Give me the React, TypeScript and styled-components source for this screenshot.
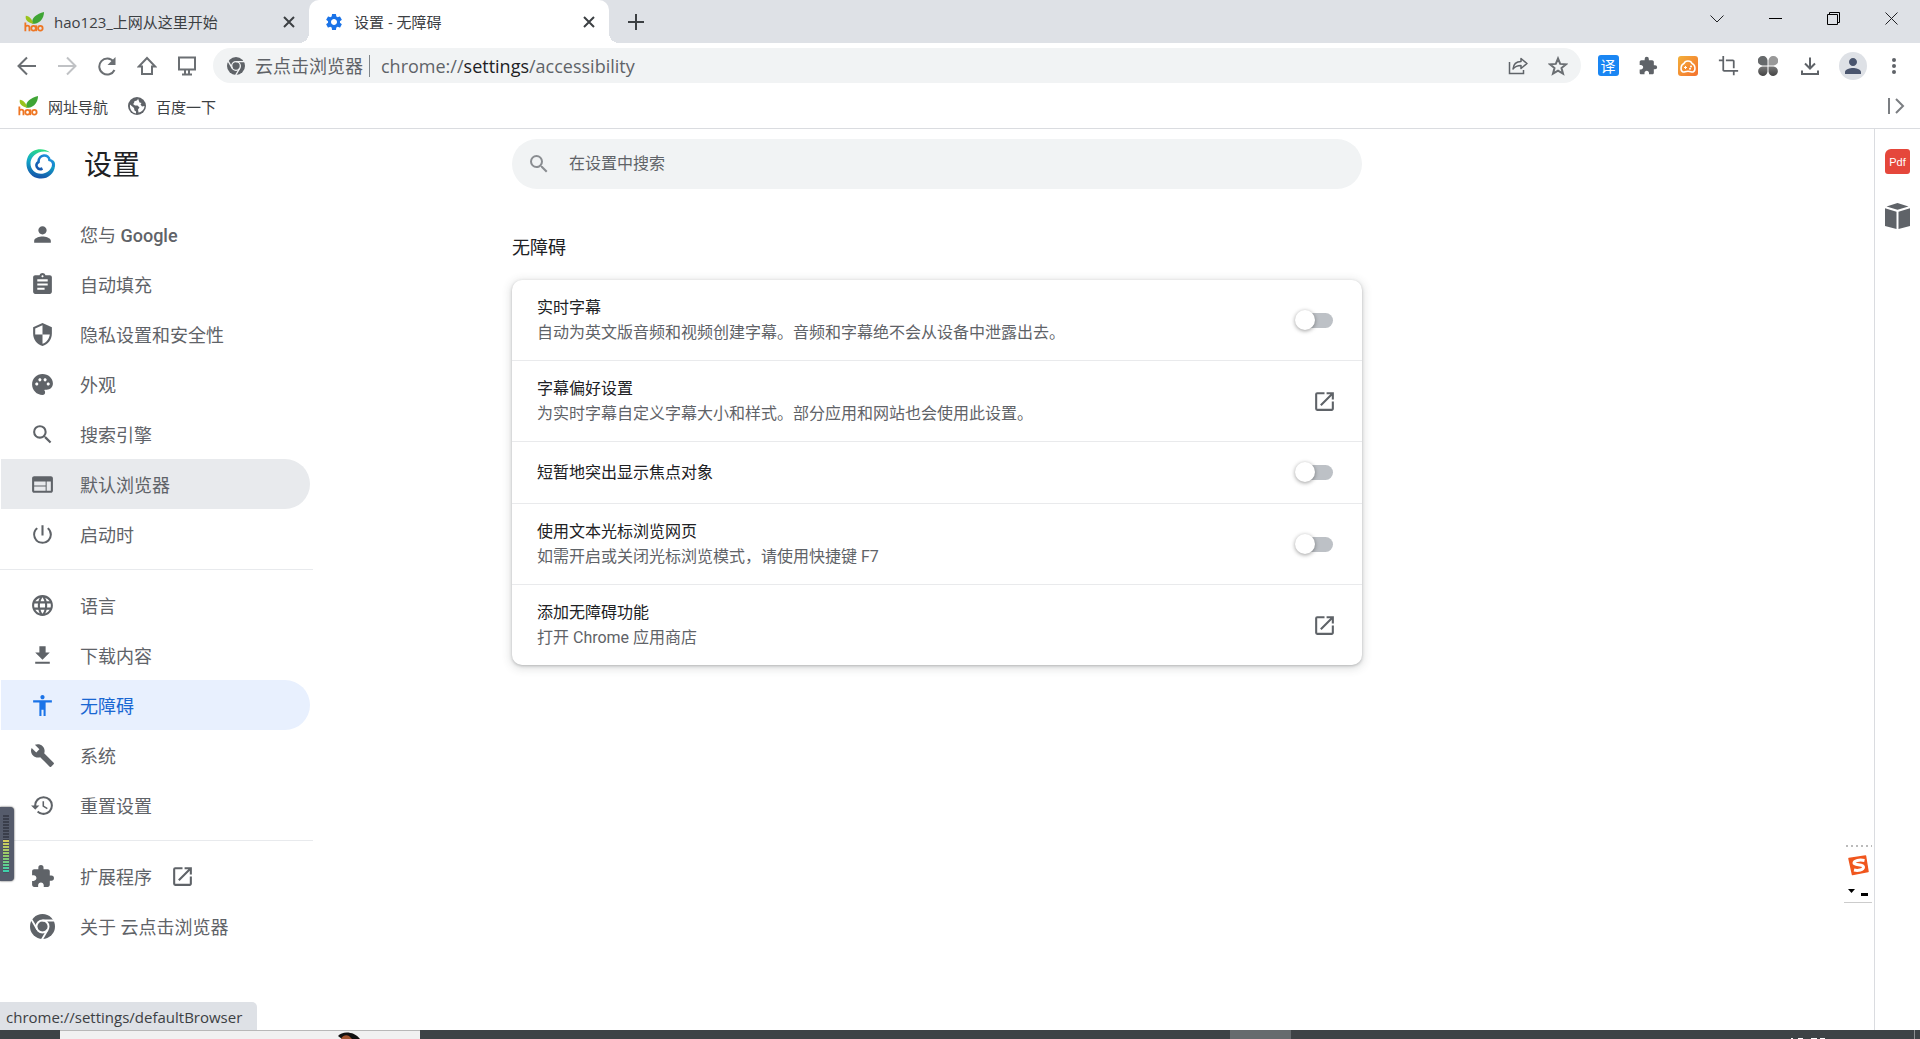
import React from 'react';
import styled, { createGlobalStyle, css } from 'styled-components';
import {
  MdAccessibility,
  MdAssignment,
  MdBuild,
  MdCrop,
  MdExtension,
  MdFileDownload,
  MdHistory,
  MdLanguage,
  MdOpenInNew,
  MdPalette,
  MdPerson,
  MdPowerSettingsNew,
  MdSearch,
  MdSecurity,
  MdSettings,
  MdWeb,
} from 'react-icons/md';

const pageFont = 'Roboto, "Noto Sans CJK SC", sans-serif';
const uiFont = '"Open Sans", "Noto Sans CJK SC", sans-serif';

const GlobalStyle = createGlobalStyle`
  *, *::before, *::after { box-sizing: border-box; }
  body { margin: 0; background: #fff; font-family: ${pageFont}; color: #202124; }
  button, input { font: inherit; color: inherit; margin: 0; }
  button { border: 0; padding: 0; background: none; cursor: pointer; }
  svg { display: block; flex: none; }
`;

/* ---------- drawings ---------- */

const HaoIcon = () => (
  <svg width="20" height="20" viewBox="0 0 22 24" preserveAspectRatio="none" aria-hidden="true">
    <path d="M9 14C8 7 14 2 22 0c0 7-4 13-10 14z" fill="#3fa535" />
    <path d="M10 14C4 13 1 9 2 4.500c4 .5 7 4 8 9.500z" fill="#9ac31c" />
    <g fill="none" stroke="#ee7623" strokeWidth="2">
      <path d="M1.500 12.500V23M1.500 18.500c0-3 4.500-3 4.500 0V23" />
      <ellipse cx="10.500" cy="19.500" rx="2.500" ry="2.800" />
      <path d="M13.500 16v7" />
      <ellipse cx="18" cy="19.500" rx="2.500" ry="2.800" />
    </g>
  </svg>
);

const CloseIcon = () => (
  <svg width="12" height="12" viewBox="0 0 12 12" stroke="#3c4043" strokeWidth="2" aria-hidden="true">
    <path d="M1 1l10 10M11 1L1 11" />
  </svg>
);

const PlusIcon = () => (
  <svg width="16" height="16" viewBox="0 0 16 16" stroke="#3c4043" strokeWidth="2" aria-hidden="true">
    <path d="M8 0v16M0 8h16" />
  </svg>
);

const line = { fill: 'none', stroke: '#6b6f73', strokeWidth: 2 };

const BackIcon = () => (
  <svg width="20" height="20" viewBox="0 0 20 20" {...line} aria-hidden="true">
    <path d="M19 10H2M10 1.500L1.500 10l8.500 8.500" />
  </svg>
);

const ForwardIcon = () => (
  <svg width="20" height="20" viewBox="0 0 20 20" fill="none" stroke="#c0c2c5" strokeWidth="2" aria-hidden="true">
    <path d="M1 10h17M10 1.500l8.500 8.500-8.500 8.500" />
  </svg>
);

const ReloadIcon = () => (
  <svg width="20" height="20" viewBox="0 0 20 20" {...line} aria-hidden="true">
    <path d="M17.500 14A8 8 0 1 1 16.500 5.500" />
    <path d="M18.500 1v8h-8z" fill="#6b6f73" stroke="none" />
  </svg>
);

const HomeIcon = () => (
  <svg width="20" height="20" viewBox="0 0 20 20" {...line} aria-hidden="true">
    <path d="M10 2L1.800 10.500H5V18h10v-7.500h3.200z" />
  </svg>
);

const MonitorIcon = () => (
  <svg width="20" height="20" viewBox="0 0 20 20" {...line} aria-hidden="true">
    <path d="M2 1.500h16v12H2zM5 18.500h10" />
    <path d="M8 14v4M12 14v4" />
  </svg>
);

const ChromeIcon = ({ size, gap }: { size: number; gap: string }) => (
  <svg width={size} height={size} viewBox="0 0 24 24" aria-hidden="true">
    <circle cx="12" cy="12" r="12" fill="#5f6368" />
    <g fill="none" stroke={gap} strokeWidth="1.800">
      <circle cx="12" cy="12" r="5.800" fill="#5f6368" />
      <path d="M12 6.200h11M6.980 14.900L1.500 5.400M17.020 14.900l-5.500 9.500" />
    </g>
  </svg>
);

const ShareIcon = () => (
  <svg width="20" height="18" viewBox="0 0 20 18" fill="none" stroke="#5f6368" strokeWidth="1.500" aria-hidden="true">
    <path d="M1.500 5v11.500h14V13" />
    <path d="M5 12c.5-5 3-7.500 8-7.500V1.500L19 6.500l-6 5V8.500c-4 0-6 1-8 3.500z" strokeLinejoin="round" />
  </svg>
);

const StarIcon = () => (
  <svg width="20" height="20" viewBox="0 0 20 20" {...line} aria-hidden="true">
    <path d="M10 2.500l2.200 5.400 5.800.4-4.500 3.700 1.500 5.700-5-3.100-5 3.100 1.500-5.700L2 8.300l5.800-.4z" />
  </svg>
);

const GameIcon = () => (
  <svg width="20" height="20" viewBox="0 0 20 20" aria-hidden="true">
    <defs>
      <linearGradient id="game" x1="0" y1="0" x2="1" y2="1">
        <stop offset="0" stopColor="#f2b03a" />
        <stop offset="1" stopColor="#f5702c" />
      </linearGradient>
    </defs>
    <rect width="20" height="20" rx="3" fill="url(#game)" />
    <path
      d="M6 7.500C7 4 13 4 14 7.500c3.500 1 4 7.500 1 8.500-2 .3-2-.8-5-.8s-3 1.100-5 .8C2 15 2.500 8.500 6 7.500z"
      fill="none"
      stroke="#fff"
      strokeWidth="1.500"
    />
    <path d="M6 11.500h3M7.500 10v3" stroke="#fff" strokeWidth="1" />
    <circle cx="13" cy="10.500" r="1" fill="#fff" />
    <circle cx="12" cy="12.800" r="1" fill="#fff" />
  </svg>
);

const CloverIcon = () => (
  <svg width="20" height="20" viewBox="0 0 20 20" aria-hidden="true">
    <defs>
      <linearGradient id="leaf" x1="0" y1="0" x2="0" y2="1">
        <stop offset="0" stopColor="#777" />
        <stop offset="1" stopColor="#444" />
      </linearGradient>
    </defs>
    <path d="M4.500 0A4.500 4.500 0 0 1 9.500 4.500v5h-5a4.700 4.700 0 0 1 0-9.500z" fill="#66696b" />
    <path d="M15.500 0a4.700 4.700 0 0 1 0 9.500h-5v-5A4.700 4.700 0 0 1 15.500 0z" fill="#999" />
    <path d="M4.500 10.500h5v5a4.700 4.700 0 1 1-5-5z" fill="url(#leaf)" />
    <path d="M10.500 10.500h5a4.700 4.700 0 1 1-5 5z" fill="url(#leaf)" />
  </svg>
);

const TrayIcon = () => (
  <svg width="20" height="20" viewBox="0 0 20 20" fill="none" stroke="#5f6368" strokeWidth="2" aria-hidden="true">
    <path d="M10 1.500V12M5 7.500l5 5 5-5M2 14.500V18h16v-3.500" />
  </svg>
);

const BookmarkGlobe = () => (
  <svg width="18" height="18" viewBox="0 0 18 18" aria-hidden="true">
    <circle cx="9" cy="9" r="9" fill="#5f6368" />
    <path d="M10 1.500c-.5 2-1 2-3 2.500-1.500.5 0 2-2 3l2 1.500h2.500l2 2-1.500 2 .5 3c3.500-.5 6-3.500 6-6.500l-2.500.5-1.500-2 1-1.500-2-.5z" fill="#fff" />
    <path d="M2 7.500l4 3.500.5 2.500 1.500 1v2C4 15.500 1.500 12.500 2 7.500z" fill="#fff" />
  </svg>
);

const PanelIcon = () => (
  <svg width="18" height="16" viewBox="0 0 18 16" fill="none" stroke="#7b7e82" strokeWidth="2" aria-hidden="true">
    <path d="M2 0v16M9 1l7 7-7 7" />
  </svg>
);

const CubeIcon = () => (
  <svg width="25" height="26" viewBox="0 0 25 26" fill="#5f6368" aria-hidden="true">
    <path d="M12.500 0L23.500 3.500 12.500 6.800 1.500 3.500zM0 5.200l11.500 3.600V26L0 23zM25 5.200L13.500 8.800V26L25 23z" />
  </svg>
);

const CloudLogo = () => (
  <svg width="30" height="30" viewBox="0 0 30 30" fill="none" aria-hidden="true">
    <defs>
      <linearGradient id="ring" x1="0.600" y1="0" x2="0.400" y2="1">
        <stop offset="0" stopColor="#2fe07c" />
        <stop offset="0.450" stopColor="#12a9c9" />
        <stop offset="1" stopColor="#1550a8" />
      </linearGradient>
      <linearGradient id="cloud" x1="0" y1="1" x2="1" y2="0">
        <stop offset="0" stopColor="#1550a8" />
        <stop offset="1" stopColor="#1fa0e8" />
      </linearGradient>
    </defs>
    <path
      d="M24 3.500C17-2 6-.5 2 7.500-2 16 2 26.500 11 29c9 2.500 17-3 18-12 .4-3-.5-5-2.500-6 .5 6-2 12-9 13.500C10 26 4.500 21 4.500 14.500 4.500 7 13 0 24 3.500z"
      fill="url(#ring)"
    />
    <path d="M16.500 19.500c-5 2.500-8.500-4-4-6.500 0-8 10.500-8.500 11-2 3 .5 4.500 3.500 3.500 6.500" stroke="url(#cloud)" strokeWidth="2.600" />
  </svg>
);

const SogouIcon = () => (
  <svg width="22" height="22" viewBox="0 0 22 22" aria-hidden="true">
    <path d="M2 4.500L18.500 2 21 17.500 5.500 20.500z" fill="#f0561d" stroke="#f0561d" strokeWidth="1.500" strokeLinejoin="round" />
    <path d="M17.500 6.500c-5-1-10.500 0-10.500 2.500S16.500 10 16.500 13s-5.500 4-9.500 3" fill="none" stroke="#fff" strokeWidth="3" />
  </svg>
);

/* ---------- browser frame ---------- */

const Shell = styled.div`
  min-height: 100vh;
  display: flex;
  flex-direction: column;
  position: relative;
`;

const TabStrip = styled.header`
  display: flex;
  align-items: stretch;
  height: 43px;
  background: #dee1e6;
  font-family: ${uiFont};
  font-size: 15px;
  color: #3c4043;
`;

const Tab = styled.div<{ $active?: boolean }>`
  position: relative;
  display: flex;
  align-items: center;
  gap: 8px;
  width: 300px;
  padding: 0 14px 0 15px;
  margin-left: ${(p) => (p.$active ? 0 : 9)}px;
  ${(p) =>
    p.$active &&
    css`
      background: #fff;
      border-radius: 10px 10px 0 0;
      &::before,
      &::after {
        content: '';
        position: absolute;
        bottom: 0;
        width: 10px;
        height: 10px;
      }
      &::before {
        left: -10px;
        background: radial-gradient(circle at 0 0, transparent 10px, #fff 10px);
      }
      &::after {
        right: -10px;
        background: radial-gradient(circle at 100% 0, transparent 10px, #fff 10px);
      }
    `}
`;

const TabTitle = styled.button`
  flex: 1;
  display: flex;
  align-items: center;
  gap: 10px;
  text-align: left;
  white-space: nowrap;
`;

const NewTab = styled.button`
  display: grid;
  place-items: center;
  width: 54px;
`;

const WindowButtons = styled.div`
  display: flex;
  margin-left: auto;
  height: 37px;
`;

const WindowButton = styled.button`
  display: grid;
  place-items: center;
  width: 58px;
`;

const Toolbar = styled.div`
  display: flex;
  align-items: center;
  height: 45px;
  padding: 0 7px;
  font-family: ${uiFont};
`;

const ToolButton = styled.button<{ $width?: number }>`
  display: grid;
  place-items: center;
  width: ${(p) => p.$width ?? 40}px;
  height: 35px;
  color: #5f6368;
`;

const Omnibox = styled.div`
  flex: 1;
  display: flex;
  align-items: center;
  height: 35px;
  margin: 0 7px 0 6px;
  padding: 0 3px 0 14px;
  border-radius: 18px;
  background: #f1f3f4;
  color: #5f6368;
  font-size: 18px;
  line-height: 22px;
  white-space: nowrap;
`;

const SiteName = styled.span`
  padding: 0 6px 0 10px;
  border-right: 1px solid #80868b;
`;

const Address = styled.div`
  flex: 1;
  padding-left: 11px;
  b {
    font-weight: 400;
    color: #202124;
  }
`;

const TranslateBadge = styled.span`
  display: grid;
  place-items: center;
  width: 21px;
  height: 21px;
  border-radius: 3px;
  background: #1a86f3;
  color: #fff;
  font-size: 15px;
  line-height: 20px;
`;

const Avatar = styled.span`
  display: grid;
  place-items: center;
  width: 28px;
  height: 28px;
  border-radius: 50%;
  background: #dee1e6;
  color: #4a556e;
`;

const BookmarkBar = styled.nav`
  display: flex;
  align-items: center;
  gap: 20px;
  height: 41px;
  padding: 0 15px 4px 18px;
  border-bottom: 1px solid #dadce0;
  font-family: ${uiFont};
  font-size: 15px;
  color: #3c4043;
  button:last-child {
    margin-left: auto;
  }
`;

const Bookmark = styled.a`
  display: flex;
  align-items: center;
  gap: 10px;
  color: inherit;
  text-decoration: none;
`;

/* ---------- page ---------- */

const Body = styled.div`
  flex: 1;
  display: flex;
`;

const Page = styled.div`
  flex: 1;
  display: grid;
  grid-template-columns: minmax(333px, 1fr) minmax(0, 850px) 1fr;
`;

const SidePanel = styled.aside`
  display: flex;
  flex-direction: column;
  align-items: center;
  gap: 29px;
  width: 46px;
  padding-top: 20px;
  border-left: 1px solid #dadce0;
`;

const PdfBadge = styled.span`
  display: grid;
  place-items: center;
  width: 25px;
  height: 25px;
  border-radius: 6px 3px 3px 3px;
  background: #e5473b;
  color: #fff;
  font-family: "Liberation Sans", sans-serif;
  font-size: 11px;
`;

const Menu = styled.div`
  width: 313px;
`;

const Brand = styled.div`
  display: flex;
  align-items: center;
  gap: 28px;
  height: 70px;
  padding-left: 26px;
`;

const BrandTitle = styled.h1`
  margin: 0;
  padding-top: 4px;
  font-size: 28px;
  line-height: 34px;
  font-weight: 400;
`;

const MenuGroup = styled.nav`
  padding: 10px 0;
  & + & {
    border-top: 1px solid #e8eaed;
  }
`;

const MenuLink = styled.a<{ $state?: 'hover' | 'selected' }>`
  display: flex;
  align-items: center;
  gap: 25px;
  height: 50px;
  margin: 0 3px 0 1px;
  padding-left: 29px;
  border-radius: 0 25px 25px 0;
  font-size: 18px;
  text-decoration: none;
  color: ${(p) => (p.$state === 'selected' ? '#1967d2' : '#5f6368')};
  background: ${(p) => (p.$state === 'selected' ? '#e8f0fe' : p.$state === 'hover' ? '#e8eaed' : 'transparent')};
  svg {
    color: ${(p) => (p.$state === 'selected' ? '#1a73e8' : '#5f6368')};
  }
  b {
    font-weight: 500;
  }
`;

const MenuText = styled.span<{ $external?: boolean }>`
  ${(p) =>
    p.$external &&
    css`
      display: flex;
      align-items: center;
      gap: 18px;
    `}
`;

const Main = styled.main`
  padding-top: 10px;
`;

const SearchField = styled.label`
  display: flex;
  align-items: center;
  gap: 18px;
  height: 50px;
  padding: 0 15px;
  border-radius: 25px;
  background: #f1f3f4;
  color: #8a8d91;
`;

const SearchInput = styled.input`
  flex: 1;
  border: 0;
  padding: 0;
  outline: 0;
  background: none;
  font-size: 16px;
  line-height: 24px;
  color: #202124;
  &::placeholder {
    color: #5f6368;
    opacity: 1;
  }
`;

const SectionTitle = styled.h2`
  margin: 46px 0 19px;
  font-size: 18px;
  line-height: 26px;
  font-weight: 400;
`;

const Card = styled.section`
  border-radius: 10px;
  background: #fff;
  box-shadow: 0 1px 3px rgba(60, 64, 67, 0.3), 0 2px 8px 2px rgba(60, 64, 67, 0.15);
`;

const Row = styled.div`
  display: flex;
  align-items: center;
  justify-content: space-between;
  min-height: 62px;
  padding: 15px 25px;
  font-size: 16px;
  line-height: 25px;
  & + & {
    border-top: 1px solid #e9eaec;
  }
`;

const RowLabel = styled.label`
  display: block;
`;

const RowHint = styled.div`
  color: #5f6368;
`;

const Switch = styled.input`
  appearance: none;
  position: relative;
  width: 35px;
  height: 15px;
  margin-right: 4px;
  border-radius: 8px;
  background: #bdc1c6;
  cursor: pointer;
  &::before {
    content: '';
    position: absolute;
    top: -3px;
    left: -3px;
    width: 20px;
    height: 20px;
    border-radius: 50%;
    background: #fff;
    box-shadow: 0 1px 4px rgba(0, 0, 0, 0.4);
  }
  &:checked::before {
    left: 18px;
    background: #1a73e8;
  }
`;

const LinkButton = styled.button`
  display: grid;
  place-items: center;
  color: #5f6368;
`;

/* ---------- things floating over the page ---------- */

const StatusBubble = styled.div`
  position: absolute;
  left: 0;
  bottom: 9px;
  height: 28px;
  padding: 0 15px 0 6px;
  border-radius: 0 5px 0 0;
  background: #dee1e6;
  color: #3c4043;
  font-family: ${uiFont};
  font-size: 15px;
  line-height: 30px;
`;

const Meter = styled.div`
  position: absolute;
  left: 0;
  bottom: 158px;
  display: flex;
  flex-direction: column;
  align-items: center;
  padding: 8px 5px 8px 3px;
  border-radius: 0 4px 4px 0;
  background: #555b6b;
  box-shadow: 0 0 2px #333;
`;

const MeterLevel = styled.div<{ $lit?: boolean }>`
  width: 6px;
  height: ${(p) => (p.$lit ? 33 : 25)}px;
  background: ${(p) =>
    p.$lit
      ? 'repeating-linear-gradient(transparent 0 2px, #4b505e 2px 3px), linear-gradient(#d9cf5b, #8ecb6c 50%, #35d0b4)'
      : 'repeating-linear-gradient(#3a3e4b 0 2px, #555b6b 2px 3px)'};
`;

const InputBar = styled.div`
  position: absolute;
  right: 48px;
  bottom: 136px;
  display: flex;
  flex-direction: column;
  align-items: center;
  gap: 13px;
  width: 28px;
  height: 58px;
  padding-top: 9px;
  border-bottom: 1px solid #ccc;
  background: repeating-linear-gradient(90deg, transparent 0 2px, #bbb 2px 4px, transparent 4px 5px) top / 100% 2px no-repeat;
`;

const Taskbar = styled.footer`
  position: relative;
  display: flex;
  height: 9px;
  overflow: hidden;
  background: #3e4346;
  padding-left: 60px;
`;

const TaskSearch = styled.div`
  display: flex;
  justify-content: flex-end;
  width: 360px;
  padding-right: 60px;
  background: #f1f1f1;
  border-top: 1px solid #b8b8b8;
`;

const TaskTile = styled.div`
  width: 61px;
  margin-left: auto;
  background: #666b6e;
`;

const TaskTray = styled.div`
  display: flex;
  justify-content: flex-end;
  align-items: flex-end;
  width: 536px;
`;

const TaskEdge = styled.div`
  width: 6px;
  margin-left: 87px;
  border-left: 1px solid #8d9092;
`;

type MenuItem = {
  label: React.ReactNode;
  icon: React.ReactNode;
  state?: 'hover' | 'selected';
  external?: boolean;
};

const groups: MenuItem[][] = [
  [
    { label: <>您与 <b>Google</b></>, icon: <MdPerson size={25} /> },
    { label: '自动填充', icon: <MdAssignment size={25} /> },
    { label: '隐私设置和安全性', icon: <MdSecurity size={25} /> },
    { label: '外观', icon: <MdPalette size={25} /> },
    { label: '搜索引擎', icon: <MdSearch size={25} /> },
    { label: '默认浏览器', icon: <MdWeb size={25} />, state: 'hover' },
    { label: '启动时', icon: <MdPowerSettingsNew size={25} /> },
  ],
  [
    { label: '语言', icon: <MdLanguage size={25} /> },
    { label: '下载内容', icon: <MdFileDownload size={25} /> },
    { label: '无障碍', icon: <MdAccessibility size={25} />, state: 'selected' },
    { label: '系统', icon: <MdBuild size={25} /> },
    { label: '重置设置', icon: <MdHistory size={25} /> },
  ],
  [
    { label: '扩展程序', icon: <MdExtension size={25} />, external: true },
    { label: '关于 云点击浏览器', icon: <ChromeIcon size={25} gap="#fff" /> },
  ],
];

const rows: { id: string; title: string; hint?: string; kind: 'switch' | 'link' }[] = [
  { id: 'live-caption', title: '实时字幕', hint: '自动为英文版音频和视频创建字幕。音频和字幕绝不会从设备中泄露出去。', kind: 'switch' },
  { id: 'caption-style', title: '字幕偏好设置', hint: '为实时字幕自定义字幕大小和样式。部分应用和网站也会使用此设置。', kind: 'link' },
  { id: 'focus-highlight', title: '短暂地突出显示焦点对象', kind: 'switch' },
  { id: 'caret-browsing', title: '使用文本光标浏览网页', hint: '如需开启或关闭光标浏览模式，请使用快捷键 F7', kind: 'switch' },
  { id: 'web-store', title: '添加无障碍功能', hint: '打开 Chrome 应用商店', kind: 'link' },
];

export default function App() {
  return (
    <Shell>
      <GlobalStyle />
      <TabStrip>
        <Tab>
          <TabTitle><HaoIcon />hao123_上网从这里开始</TabTitle>
          <button aria-label="关闭标签页"><CloseIcon /></button>
        </Tab>
        <Tab $active>
          <TabTitle><MdSettings size={20} color="#1a73e8" />设置 - 无障碍</TabTitle>
          <button aria-label="关闭标签页"><CloseIcon /></button>
        </Tab>
        <NewTab aria-label="打开新的标签页"><PlusIcon /></NewTab>
        <WindowButtons>
          <WindowButton aria-label="搜索标签页">
            <svg width="14" height="8" viewBox="0 0 14 8" fill="none" stroke="#202124"><path d="M.5.5L7 7 13.500.5" /></svg>
          </WindowButton>
          <WindowButton aria-label="最小化">
            <svg width="13" height="1" viewBox="0 0 13 1"><path d="M0 0h13v1H0z" /></svg>
          </WindowButton>
          <WindowButton aria-label="还原">
            <svg width="13" height="13" viewBox="0 0 13 13" fill="none" stroke="#000"><path d="M.5 2.500h10v10H.5zM2.500 2.500v-2h10v10h-2" /></svg>
          </WindowButton>
          <WindowButton aria-label="关闭">
            <svg width="13" height="13" viewBox="0 0 13 13" fill="none" stroke="#202124"><path d="M.5.5l12 12M12.500.5l-12 12" /></svg>
          </WindowButton>
        </WindowButtons>
      </TabStrip>

      <Toolbar>
        <ToolButton aria-label="后退"><BackIcon /></ToolButton>
        <ToolButton aria-label="前进"><ForwardIcon /></ToolButton>
        <ToolButton aria-label="重新加载"><ReloadIcon /></ToolButton>
        <ToolButton aria-label="主页"><HomeIcon /></ToolButton>
        <ToolButton aria-label="桌面"><MonitorIcon /></ToolButton>
        <Omnibox>
          <ChromeIcon size={18} gap="#f1f3f4" />
          <SiteName>云点击浏览器</SiteName>
          <Address role="textbox" tabIndex={0} aria-label="地址栏">
            chrome://<b>settings</b>/accessibility
          </Address>
          <ToolButton aria-label="分享"><ShareIcon /></ToolButton>
          <ToolButton aria-label="收藏"><StarIcon /></ToolButton>
        </Omnibox>
        <ToolButton aria-label="翻译"><TranslateBadge>译</TranslateBadge></ToolButton>
        <ToolButton aria-label="扩展程序"><MdExtension size={20} /></ToolButton>
        <ToolButton aria-label="游戏"><GameIcon /></ToolButton>
        <ToolButton aria-label="截图"><MdCrop size={21} /></ToolButton>
        <ToolButton aria-label="应用"><CloverIcon /></ToolButton>
        <ToolButton aria-label="下载" $width={44}><TrayIcon /></ToolButton>
        <ToolButton aria-label="用户" $width={42}><Avatar><MdPerson size={24} /></Avatar></ToolButton>
        <ToolButton aria-label="菜单" $width={39}>
          <svg width="4" height="16" viewBox="0 0 4 16" fill="#5f6368">
            <circle cx="2" cy="2" r="2" /><circle cx="2" cy="8" r="2" /><circle cx="2" cy="14" r="2" />
          </svg>
        </ToolButton>
      </Toolbar>

      <BookmarkBar>
        <Bookmark href="#nav"><HaoIcon />网址导航</Bookmark>
        <Bookmark href="#baidu"><BookmarkGlobe />百度一下</Bookmark>
        <button aria-label="侧边栏"><PanelIcon /></button>
      </BookmarkBar>

      <Body>
        <Page>
          <Menu>
            <Brand>
              <CloudLogo />
              <BrandTitle>设置</BrandTitle>
            </Brand>
            {groups.map((items, g) => (
              <MenuGroup key={g}>
                {items.map((item, i) => (
                  <MenuLink key={i} href="#" $state={item.state}>
                    {item.icon}
                    <MenuText $external={item.external}>
                      {item.label}
                      {item.external && <MdOpenInNew size={25} />}
                    </MenuText>
                  </MenuLink>
                ))}
              </MenuGroup>
            ))}
          </Menu>
          <Main>
            <SearchField>
              <MdSearch size={24} />
              <SearchInput type="text" placeholder="在设置中搜索" aria-label="在设置中搜索" />
            </SearchField>
            <SectionTitle>无障碍</SectionTitle>
            <Card>
              {rows.map((row) => (
                <Row key={row.id}>
                  <div>
                    <RowLabel htmlFor={row.id}>{row.title}</RowLabel>
                    {row.hint && <RowHint>{row.hint}</RowHint>}
                  </div>
                  {row.kind === 'switch' ? (
                    <Switch type="checkbox" id={row.id} />
                  ) : (
                    <LinkButton id={row.id}><MdOpenInNew size={25} /></LinkButton>
                  )}
                </Row>
              ))}
            </Card>
          </Main>
        </Page>
        <SidePanel>
          <button aria-label="Pdf"><PdfBadge>Pdf</PdfBadge></button>
          <button aria-label="工具箱"><CubeIcon /></button>
        </SidePanel>
      </Body>

      <Taskbar>
        <TaskSearch>
          <svg width="22" height="8" viewBox="0 0 22 8">
            <path d="M0 5C4 0 16 0 22 8H4z" fill="#111" />
            <path d="M3 8c1-3 5-5 8-3l3 3z" fill="#a3542f" />
          </svg>
        </TaskSearch>
        <TaskTile />
        <TaskTray>
          <svg width="36" height="1" viewBox="0 0 36 1" fill="#fff">
            <path d="M0 0h2v1H0zM7 0h5v1H7zM20 0h6v1h-6zM29 0h5v1h-5z" />
          </svg>
        </TaskTray>
        <TaskEdge />
      </Taskbar>

      <StatusBubble>chrome://settings/defaultBrowser</StatusBubble>
      <Meter>
        <MeterLevel />
        <MeterLevel $lit />
      </Meter>
      <InputBar>
        <SogouIcon />
        <svg width="22" height="8" viewBox="0 0 22 8"><path d="M1 0h7L4.500 4zM14 4h7v3h-7z" /></svg>
      </InputBar>
    </Shell>
  );
}
